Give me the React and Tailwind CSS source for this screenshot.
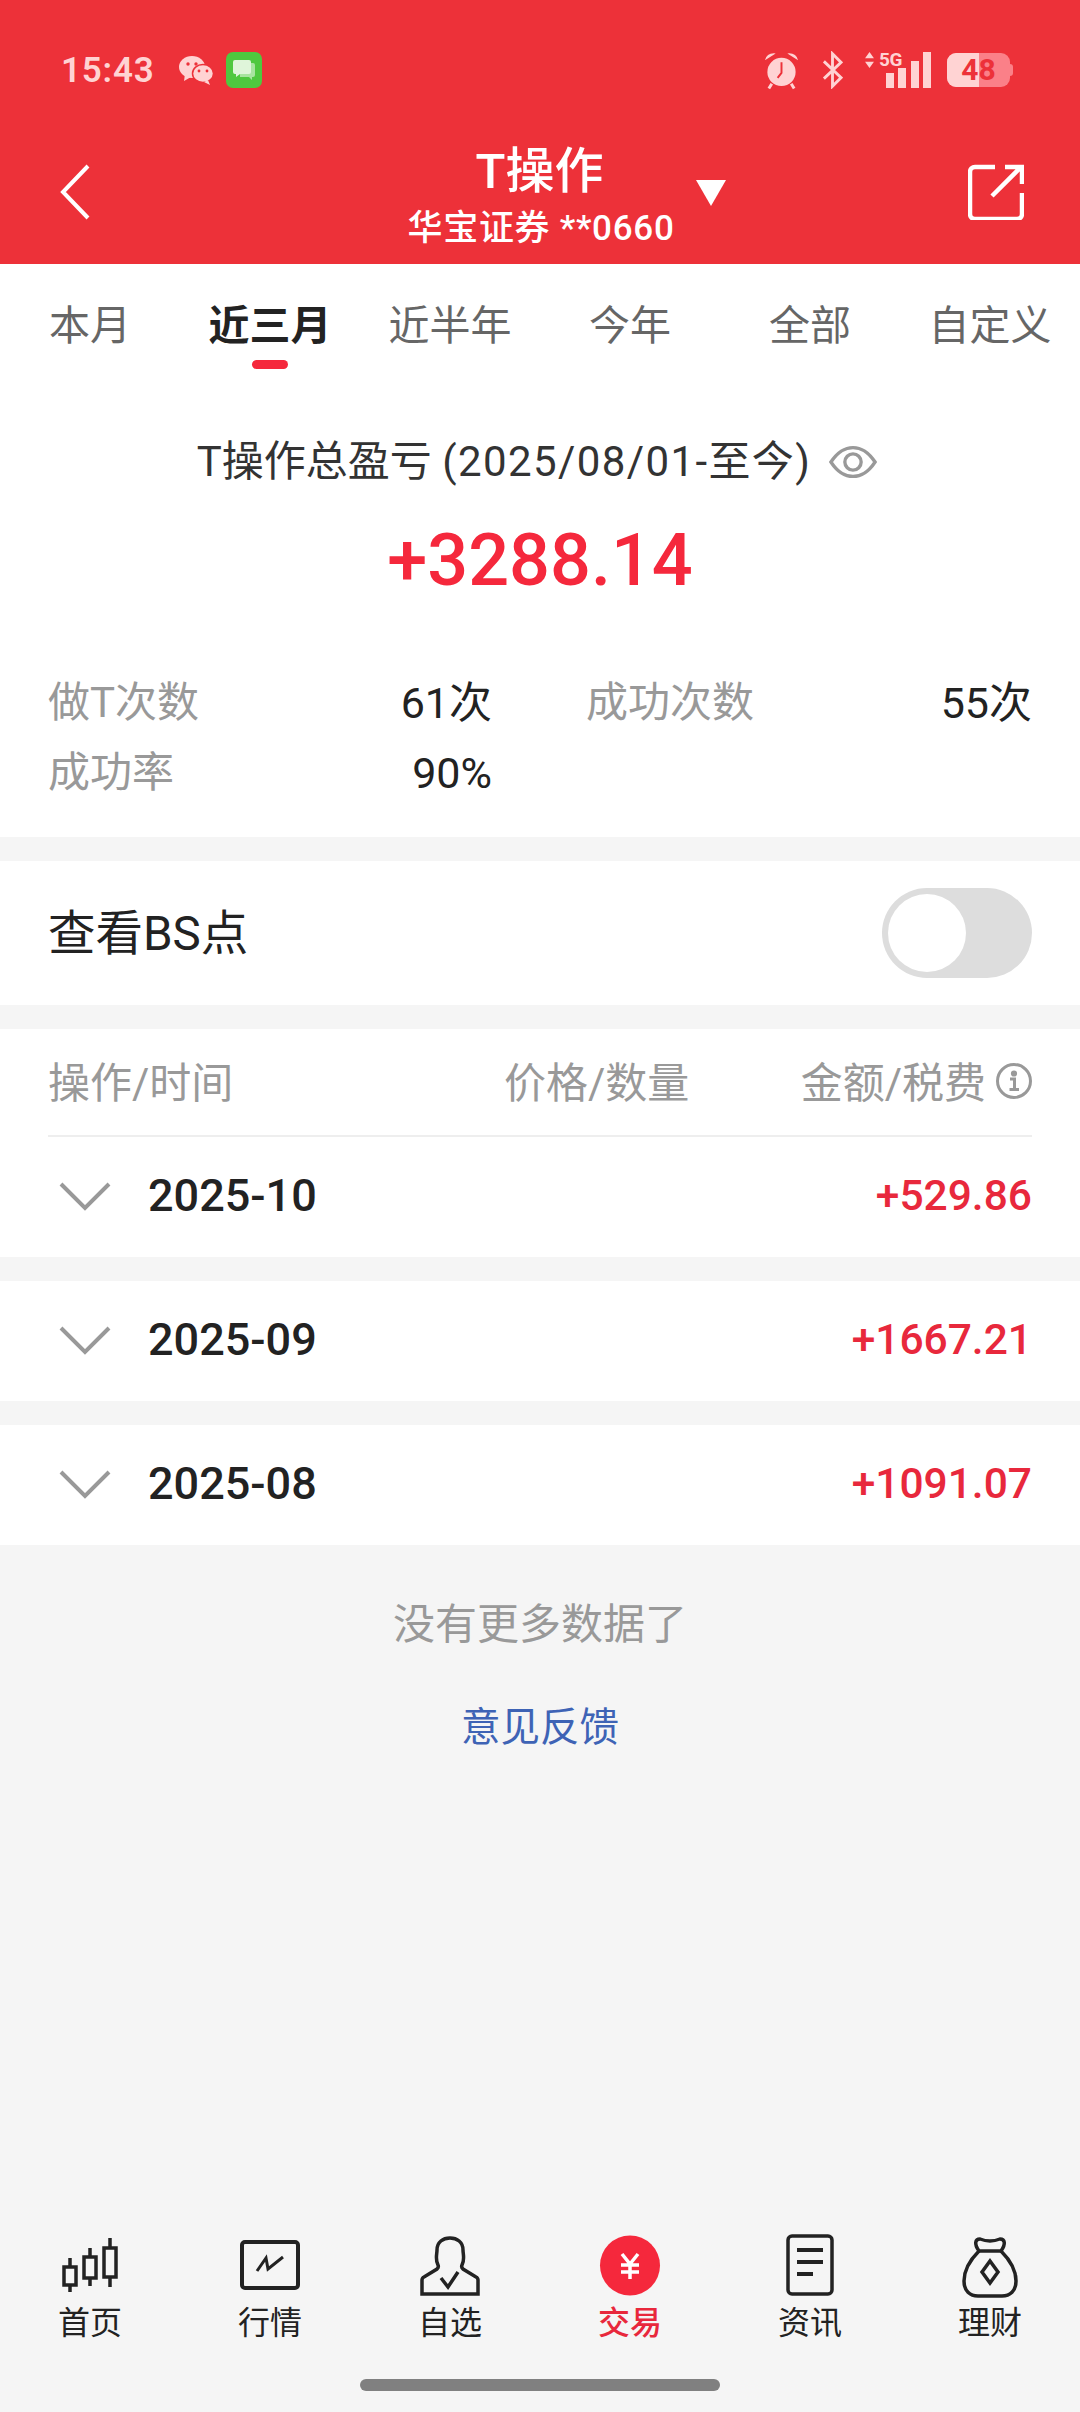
const font = { fontFamily: '"Roboto", "Noto Sans CJK SC", sans-serif' }

const tabs = ["本月", "近三月", "近半年", "今年", "全部", "自定义"]

const months = [
  { label: "2025-10", amount: "+529.86" },
  { label: "2025-09", amount: "+1667.21" },
  { label: "2025-08", amount: "+1091.07" },
]

function StatusBar() {
  return (
    <div className="flex h-[140px] items-center justify-between pl-[61px] pr-[70px] text-[#ffd3d3]">
      <div className="flex items-center">
        <span className="text-[35px] font-semibold leading-none tracking-[0.8px]">15:43</span>
        <svg width="35" height="29" viewBox="0 0 35 29" className="ml-[24px]" fill="#ffd3d3">
          <ellipse cx="13" cy="11" rx="13" ry="11" />
          <path d="M6 18l-1 7 7-4z" />
          <ellipse cx="24" cy="17.5" rx="10.5" ry="9" stroke="#ed3139" strokeWidth="1.5" />
          <path d="M29 24l2 5-6-3z" />
          <circle cx="9" cy="8" r="1.7" fill="#ed3139" />
          <circle cx="17" cy="8" r="1.7" fill="#ed3139" />
          <circle cx="20" cy="15" r="1.4" fill="#ed3139" />
          <circle cx="28" cy="15" r="1.4" fill="#ed3139" />
        </svg>
        <div className="ml-[12px] flex h-[36px] w-[36px] items-center justify-center rounded-[7px] bg-[#4fc83f]">
          <svg width="26" height="26" viewBox="0 0 26 26">
            <path d="M9 6h13a2 2 0 0 1 2 2v10a2 2 0 0 1-2 2h-1v3l-3-3H9z" fill="#a8e4a0" />
            <path d="M4 3h14a2 2 0 0 1 2 2v10a2 2 0 0 1-2 2H9l-4 3v-3H4a2 2 0 0 1-2-2V5a2 2 0 0 1 2-2z" fill="#dff5da" />
          </svg>
        </div>
      </div>
      <div className="flex items-center">
        <svg width="37" height="40" viewBox="0 0 38 40">
          <circle cx="19" cy="22" r="14.5" fill="#ffd3d3" />
          <path d="M2 10 Q4 2 13 3 Z M36 10 Q34 2 25 3 Z" fill="#ffd3d3" />
          <path d="M9 34l-3 5M29 34l3 5" stroke="#ffd3d3" strokeWidth="3" />
          <path d="M19 12v11l-4 5" stroke="#ed3139" strokeWidth="2" fill="none" />
        </svg>
        <svg width="21" height="38" viewBox="0 0 22 38" className="ml-[22px]" fill="none" stroke="#ffd3d3" strokeWidth="3">
          <path d="M2 10l18 17-9 9V2l9 9L2 28" />
        </svg>
        <div className="relative ml-[21px] flex h-[36px] w-[67px] items-end justify-end gap-[4.5px]">
          <svg width="11" height="16" viewBox="0 0 12 18" className="absolute left-0 top-0" fill="#ffd3d3">
            <path d="M6 0l5 7H1zM6 18l-5-7h10z" />
          </svg>
          <span className="absolute left-[15px] top-[-1px] text-[19px] font-bold leading-[17px] tracking-[-0.5px]">5G</span>
          <div className="h-[15px] w-[8px] bg-[#ffd3d3]" />
          <div className="h-[20px] w-[8px] bg-[#ffd3d3]" />
          <div className="h-[27px] w-[8px] bg-[#ffd3d3]" />
          <div className="h-[36px] w-[8px] bg-[#ffd3d3]" />
        </div>
        <div className="relative ml-[16px] flex h-[34px] w-[63px] items-center justify-center rounded-[9px] bg-[#fb8088] text-[30px] font-bold leading-none text-[#ed3139]">
          <div className="absolute bottom-0 left-0 top-0 w-[32px] rounded-l-[9px] bg-[#ffd3d3]" />
          <span className="relative">48</span>
          <div className="absolute right-[-3px] top-[11px] h-[12px] w-[3px] rounded-r-full bg-[#fb8088]" />
        </div>
      </div>
    </div>
  )
}

function Header() {
  return (
    <div className="h-[264px] bg-[#ed3139] text-white">
      <StatusBar />
      <div className="flex items-start pl-[58px] pr-[56px]">
        <div className="w-[56px] pt-[24px]">
          <svg width="32" height="56" viewBox="0 0 32 56" fill="none" stroke="white" strokeWidth="4">
            <path d="M30 2L5 28l25 26" />
          </svg>
        </div>
        <div className="flex flex-1 justify-center">
          <div className="relative flex flex-col items-center pt-[3px]">
            <div className="pr-[3px] text-[49px] font-medium leading-[58px]">T操作</div>
            <div className="mt-[8px] text-[35px] font-medium leading-[40px] tracking-[0.7px]">华宝证券 **0660</div>
            <svg width="30" height="26" viewBox="0 0 30 26" fill="white" className="absolute left-[289px] top-[40px]">
              <path d="M0 0h30L15 26z" />
            </svg>
          </div>
        </div>
        <svg width="56" height="56" viewBox="0 0 56 56" fill="none" stroke="white" strokeWidth="4.5" className="mt-[24px]">
          <path d="M27 3H7a5 5 0 0 0-5 5v42a5 5 0 0 0 5 5h42a5 5 0 0 0 5-5V29" />
          <path d="M24 32L53 3M37 3h17v17" />
        </svg>
      </div>
    </div>
  )
}

function Tabs() {
  return (
    <div className="grid h-[116px] grid-cols-6 bg-white">
      {tabs.map(t => (
        <div key={t} className="relative flex h-full justify-center pt-[37px]">
          <span className={t === "近三月" ? "text-[41px] font-bold leading-[50px] text-[#222222]" : "text-[41px] leading-[50px] text-[#666666]"}>
            {t}
          </span>
          {t === "近三月" && <div className="absolute left-[72px] top-[96px] h-[9px] w-[36px] rounded-full bg-[#f5283c]" />}
        </div>
      ))}
    </div>
  )
}

function Stat({ label, value, className }) {
  return (
    <div className={`flex items-center justify-between ${className}`}>
      <span className="text-[42px] leading-[60px] text-[#999999]">{label}</span>
      <span className="text-[43px] leading-[60px] text-[#222222]">{value}</span>
    </div>
  )
}

function Summary() {
  return (
    <div className="h-[457px] bg-white px-[48px]">
      <div className="flex items-center justify-center pr-[6px] pt-[52px] text-[42px] leading-[60px] text-[#333333]">
        <span>T操作总盈亏 <span className="tracking-[1.4px]">(2025/08/01-至今)</span></span>
        <svg width="48" height="34" viewBox="0 0 50 34" fill="none" stroke="#999999" strokeWidth="3.5" className="ml-[18px]">
          <path d="M2 17C10 5 17 2 25 2s15 3 23 15c-8 12-15 15-23 15S10 29 2 17z" />
          <circle cx="25" cy="17" r="8.5" />
        </svg>
      </div>
      <div className="mt-[24px] text-center text-[72px] font-medium leading-[90px] text-[#f5283c]">+3288.14</div>
      <div className="mt-[67px] flex">
        <Stat label="做T次数" value="61次" className="w-[444px]" />
        <Stat label="成功次数" value="55次" className="ml-[94px] flex-1" />
      </div>
      <Stat label="成功率" value="90%" className="mt-[10px] w-[444px]" />
    </div>
  )
}

function BsToggle() {
  return (
    <div className="mt-[24px] flex h-[144px] items-center justify-between bg-white px-[48px]">
      <span className="pt-[2px] text-[47.5px] leading-[60px] text-[#222222]">查看BS点</span>
      <div className="flex h-[90px] w-[150px] items-center rounded-full bg-[#dddddd] pl-[6px]">
        <div className="h-[78px] w-[78px] rounded-full bg-white" />
      </div>
    </div>
  )
}

function MonthRow({ label, amount, first }) {
  return (
    <div className={`flex h-[120px] items-center justify-between bg-white pb-[2px] pl-[59px] pr-[48px] ${first ? "" : "mt-[24px]"}`}>
      <div className="flex items-center">
        <svg width="52" height="30" viewBox="0 0 52 30" fill="none" stroke="#999999" strokeWidth="4">
          <path d="M2 3l24 24L50 3" />
        </svg>
        <span className="ml-[37px] text-[45px] font-medium leading-[50px] text-[#222222]">{label}</span>
      </div>
      <span className="text-[42.5px] font-medium leading-[50px] text-[#e8283c]">{amount}</span>
    </div>
  )
}

function OpsList() {
  return (
    <>
      <div className="mt-[24px] bg-white px-[48px]">
        <div className="flex h-[108px] items-center justify-between border-b-2 border-[#eeeeee] pt-[3px] text-[42px] leading-[50px] text-[#999999]">
          <span className="w-[461px]">操作/时间</span>
          <span className="w-[300px]">价格/数量</span>
          <span className="flex flex-1 items-center justify-end whitespace-nowrap">
            金额/税费
            <svg width="36" height="36" viewBox="0 0 36 36" fill="none" stroke="#999999" strokeWidth="3" className="mb-[6px] ml-[10px]">
              <circle cx="18" cy="18" r="16.5" />
              <circle cx="18" cy="10.5" r="1.6" fill="#999999" />
              <path d="M14 16h4.5v10M13.5 26.5h9.5" />
            </svg>
          </span>
        </div>
      </div>
      {months.map((m, i) => <MonthRow key={m.label} {...m} first={i === 0} />)}
    </>
  )
}

const navIconClass = "h-[62px] w-[62px] overflow-visible"

function NavIcon({ name }) {
  if (name === "home") {
    return (
      <svg viewBox="0 0 62 62" className={navIconClass} fill="none" stroke="#222222" strokeWidth="3.5">
        <rect x="5" y="31" width="12" height="18" />
        <path d="M11 22v9M11 49v7" />
        <rect x="25" y="21" width="12" height="21" />
        <path d="M31 12v9M31 42v8" />
        <rect x="45" y="12" width="12" height="29" />
        <path d="M51 2v10M51 41v10" />
      </svg>
    )
  }
  if (name === "market") {
    return (
      <svg viewBox="0 0 62 62" className={navIconClass} fill="none" stroke="#222222" strokeWidth="4">
        <rect x="3" y="6" width="56" height="46" rx="3" />
        <path d="M18 35l9-13 2 11 15-12" strokeWidth="3" />
      </svg>
    )
  }
  if (name === "watch") {
    return (
      <svg viewBox="0 0 62 62" className={navIconClass} fill="none" stroke="#222222" strokeWidth="3.5">
        <path d="M3 58V44q0-2 2-3l13-8q2-2 1-4c-3-5-1-11-1-15C18 6 24 2 31 2s13 4 13 12c0 4 2 10-1 15q-1 2 1 4l13 8q2 1 2 3v14z" />
        <path d="M22 42l7 9 10-15" strokeWidth="3.5" />
      </svg>
    )
  }
  if (name === "trade") {
    return (
      <svg viewBox="0 0 62 62" className={navIconClass}>
        <circle cx="31" cy="29.5" r="30" fill="#f5283c" />
        <path d="M23 18l8 10 8-10M22 29h18M22 36h18M31 28v15" stroke="white" strokeWidth="3.5" fill="none" />
      </svg>
    )
  }
  if (name === "news") {
    return (
      <svg viewBox="0 0 62 62" className={navIconClass} fill="none" stroke="#222222" strokeWidth="3.5">
        <rect x="9" y="0" width="44" height="58" rx="4" />
        <path d="M18 14h26M18 26h26M18 38h16" strokeWidth="4" />
      </svg>
    )
  }
  return (
    <svg viewBox="0 0 62 62" className={navIconClass} fill="none" stroke="#222222" strokeWidth="3.5">
      <path d="M20 15C15 8 16 3 21 3q10 4 20 0c5 0 6 5 1 12z" />
      <path d="M20 15C10 25 5 35 5 45c0 10 6 15 14 15h24c8 0 14-5 14-15 0-10-5-20-15-30" />
      <path d="M31 25l8 11-8 11-8-11z" />
    </svg>
  )
}

const navItems = [
  { icon: "home", label: "首页" },
  { icon: "market", label: "行情" },
  { icon: "watch", label: "自选" },
  { icon: "trade", label: "交易", active: true },
  { icon: "news", label: "资讯" },
  { icon: "wealth", label: "理财" },
]

function BottomNav() {
  return (
    <div className="mt-auto">
      <div className="grid grid-cols-6">
        {navItems.map(n => (
          <div key={n.label} className="flex flex-col items-center">
            <NavIcon name={n.icon} />
            <span className={`mt-[4px] text-[32px] leading-[42px] ${n.active ? "font-medium text-[#e8283c]" : "text-[#222222]"}`}>
              {n.label}
            </span>
          </div>
        ))}
      </div>
      <div className="mb-[21px] mt-[35px] flex justify-center">
        <div className="h-[12px] w-[360px] rounded-full bg-[#808080]" />
      </div>
    </div>
  )
}

export default function App() {
  return (
    <div className="flex h-[2412px] w-[1080px] flex-col overflow-hidden bg-[#f5f5f5]" style={font}>
      <Header />
      <Tabs />
      <Summary />
      <BsToggle />
      <OpsList />
      <div className="pt-[50px] text-center text-[42px] leading-[60px] text-[#999999]">没有更多数据了</div>
      <div className="pt-[43px] text-center text-[39.5px] leading-[60px] text-[#3e63b5]">意见反馈</div>
      <BottomNav />
    </div>
  )
}
